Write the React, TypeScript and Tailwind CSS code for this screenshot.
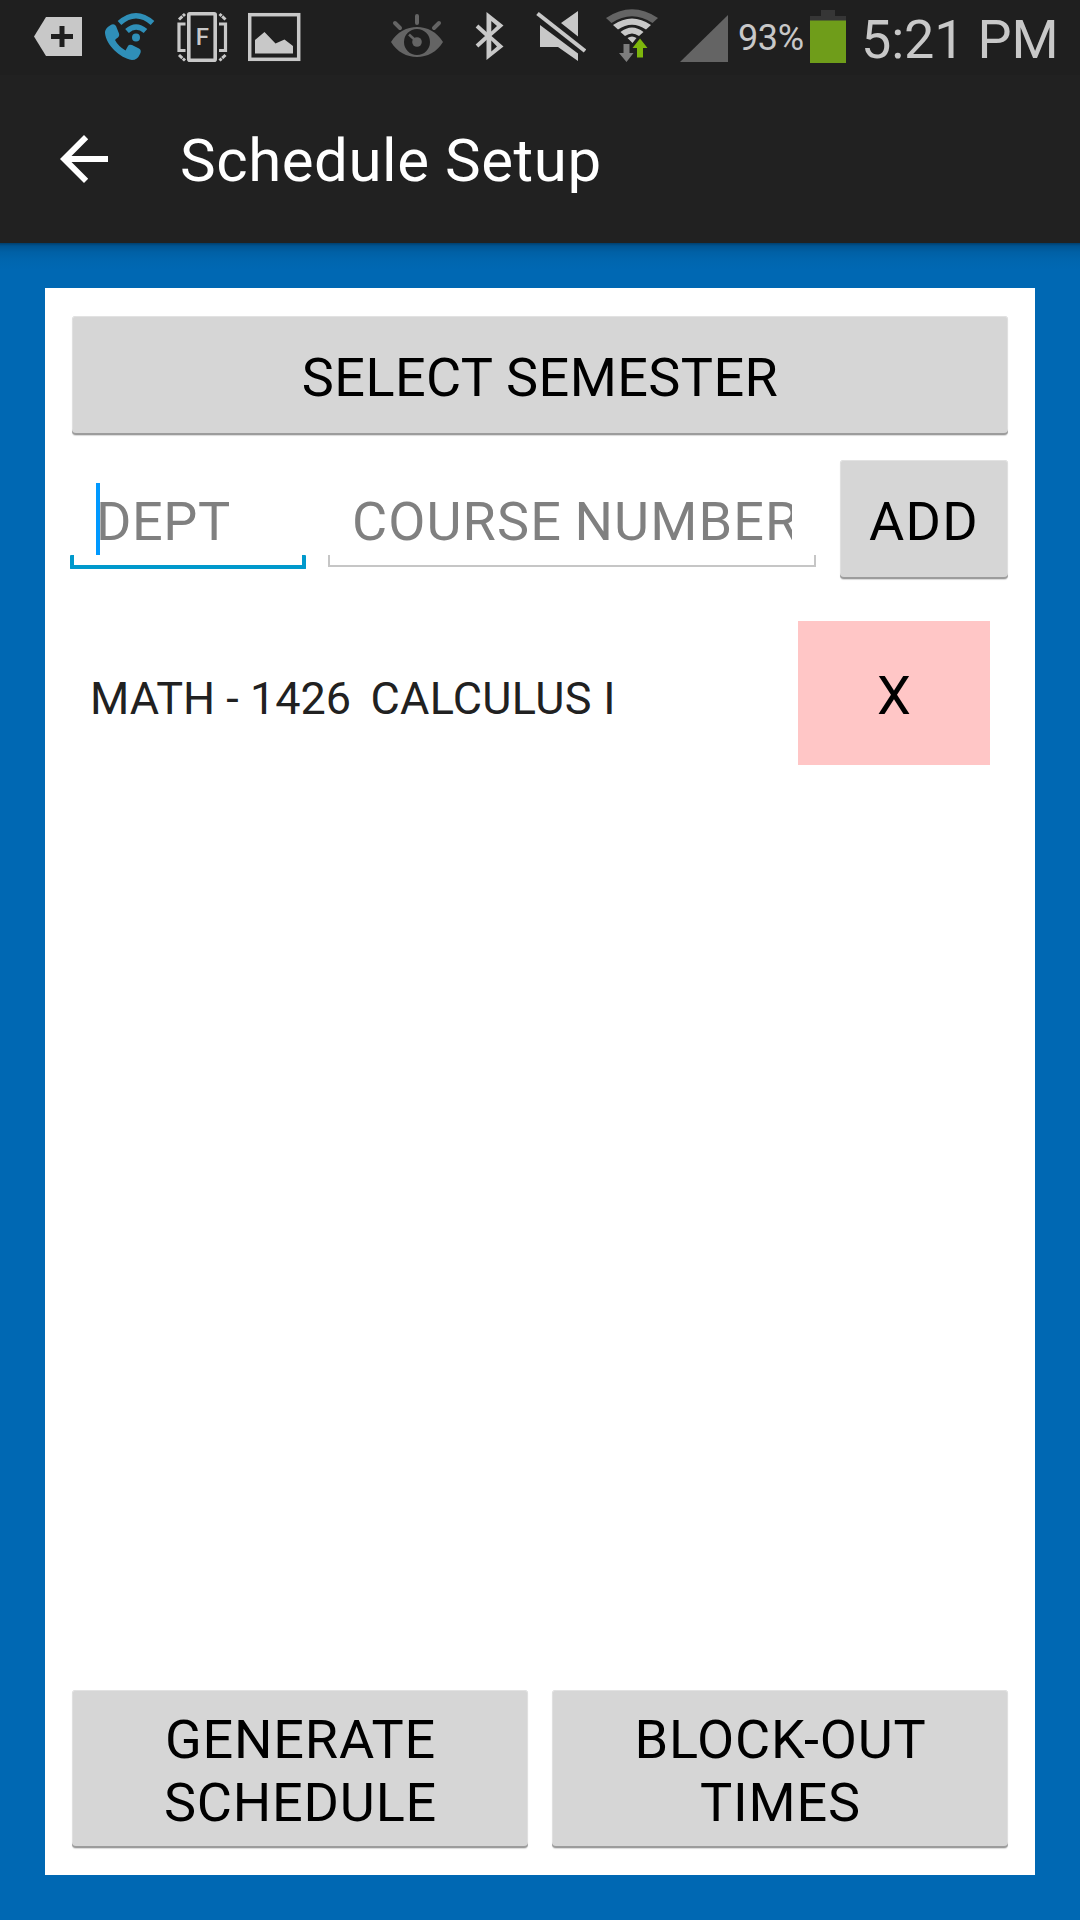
import type { ReactNode } from "react";

const raised =
  "bg-[#d6d6d6] rounded-[4px] text-black text-[54px] leading-[63px] text-center shadow-[inset_0_-2px_0_#9c9c9c,inset_0_1px_0_#e2e2e2,inset_1px_0_0_#e0e0e0,inset_-1px_0_0_#e0e0e0,0_1px_1px_rgba(0,0,0,0.15)]";

function Glyph({ x, w, className, children }: { x: number; w: number; className: string; children: ReactNode }) {
  return (
    <svg className={`shrink-0 ${className}`} width={w} height={75} viewBox={`${x} 0 ${w} 75`} fill="none">
      {children}
    </svg>
  );
}

function StatusBar() {
  return (
    <div className="flex h-[75px] w-full bg-[#1f1f1f] text-[#c8c8c8]">
      <Glyph x={34} w={48} className="ml-[34px]">
        <path d="M34 36.5 46 17H82V56H46Z" fill="#c8c8c8" />
        <path d="M51 36.5H73M62 26V47" stroke="#1f1f1f" strokeWidth="5" />
      </Glyph>
      <Glyph x={104} w={52} className="ml-[22px]">
        <path
          d="M110 25.5 Q114 23 116 26 L119 33.5 Q120 36.5 116.5 38.5 L115 40 Q118 46 125.500 50.500 L128 46 Q129 44 132 45 L139 48.500 Q142 50 140 54 Q137.500 60 132 60 C120 58 106 45 105 33 Q105 28 110 25.500Z"
          fill="#2f8fb8"
        />
        <path d="M119.500 23 Q136 8.500 152.500 23M127 31 Q136 23 145.500 31" stroke="#2f8fb8" strokeWidth="5.500" />
        <circle cx="136" cy="37.500" r="4" fill="#2f8fb8" />
      </Glyph>
      <Glyph x={176} w={52} className="ml-[20px]">
        <rect x="188.800" y="13.800" width="26.400" height="46.400" rx="1" stroke="#c8c8c8" strokeWidth="3.600" />
        <path d="M185.500 24H179V50.500H185.500M219 24H225.500V50.500H219" stroke="#c8c8c8" strokeWidth="3.200" />
        <path
          d="M179 19.500 L185 14M225.500 19.500 L219.500 14M179 55 L185 60.500M225.500 55 L219.500 60.500"
          stroke="#c8c8c8"
          strokeWidth="3"
          strokeDasharray="4.500 0.800"
        />
        <text x="202.300" y="44.500" textAnchor="middle" fontSize="24" fontWeight="500" fill="#c8c8c8" fontFamily="Roboto, sans-serif">
          F
        </text>
      </Glyph>
      <Glyph x={248} w={53} className="ml-[20px]">
        <rect x="249.700" y="14.700" width="49" height="44.600" stroke="#c8c8c8" strokeWidth="3.500" />
        <path d="M255 53.500V40L264.500 32L275.500 43.500L284.500 39.500L293 46V53.500Z" fill="#c8c8c8" />
      </Glyph>
      <Glyph x={390} w={54} className="ml-[89px]">
        <path
          fillRule="evenodd"
          d="M391 42 C403 22 431 22 443 42 C431 62 403 62 391 42ZM404 42 a13 13 0 1 0 26 0 a13 13 0 1 0 -26 0Z"
          fill="#646464"
        />
        <circle cx="417" cy="42" r="4.800" fill="#646464" />
        <path d="M409 34.500 L415 40" stroke="#646464" strokeWidth="2.500" />
        <path d="M417 16V23M395 23 L400 28M439 23 L434 28" stroke="#646464" strokeWidth="4" strokeLinecap="round" />
      </Glyph>
      <Glyph x={474} w={30} className="ml-[30px]">
        <path
          fillRule="evenodd"
          d="M486.500 12 L503.500 25.500 L491.500 36 L503.500 46.500 L486.500 60ZM491.300 21 V31.500 L497 26ZM491.300 40.500 V51.500 L497 46.500Z"
          fill="#c8c8c8"
        />
        <path d="M477 26 L488 36 L477 46" stroke="#c8c8c8" strokeWidth="4" />
      </Glyph>
      <Glyph x={535} w={51} className="ml-[31px]">
        <path d="M561 23 L578 11V36.500ZM540 25 L578 53.500V61L558 47H540Z" fill="#c8c8c8" />
        <path d="M537.500 13.500 L585 51" stroke="#c8c8c8" strokeWidth="4" />
      </Glyph>
      <Glyph x={606} w={53} className="ml-[20px]">
        <path d="M606 18 Q632 0.500 658 18 L652.500 23 Q632 9.500 611.500 23Z" fill="#646464" />
        <path
          d="M613 25 Q632 12 651 25 L646 29.500 Q632 20 618 29.500ZM620.500 32 Q632 23 643.500 32 L639 36 Q632 31 625 36ZM627.500 38 Q632 35 636.500 38 L632.500 43Z"
          fill="#c8c8c8"
        />
        <path d="M623.500 44H629.500V53H633.500L626.500 62L619 53H623.500Z" fill="#7d7d7d" />
        <path d="M637 57.500H643V48H647.500L640 38.500L632.500 48H637Z" fill="#7db60c" />
      </Glyph>
      <Glyph x={680} w={48} className="ml-[21px]">
        <path d="M680 62 L728 15V62Z" fill="#646464" />
      </Glyph>
      <span className="ml-[10px] w-[67px] whitespace-nowrap pt-[17px] text-[36px] leading-[42px] tracking-[-0.4px]">93%</span>
      <Glyph x={810} w={36} className="ml-[5px]">
        <path d="M821 10H835V16H846V21H810V16H821Z" fill="#363636" />
        <path d="M810 20.500H846V63H810Z" fill="#6f9d1a" />
      </Glyph>
      <span className="ml-[15px] whitespace-nowrap pt-[8px] text-[54px] leading-[63px] tracking-[-0.2px]">5:21 PM</span>
    </div>
  );
}

function CourseForm() {
  return (
    <div className="mt-[25px] flex h-[119px] w-full text-[54px] leading-[63px] text-[#808080]">
      <div className="-ml-[2px] flex w-[236px] flex-col">
        <div className="mt-[23px] flex h-[72px] pl-[26px]">
          <div className="w-[4px] shrink-0 bg-[#0099ff]" />
          <span className="-ml-[4px] pt-[7px] tracking-[0.6px]">DEPT</span>
        </div>
        <div className="h-[14px] rounded-[1px] border-4 border-t-0 border-[#0099cc]" />
      </div>
      <div className="ml-[22px] flex w-[488px] flex-col">
        <div className="mx-[24px] mt-[23px] h-[72px] overflow-hidden whitespace-nowrap pt-[7px] tracking-[1.1px] [word-spacing:-2px]">
          COURSE NUMBER
        </div>
        <div className="h-[12px] border-2 border-t-0 border-[#c6c6c6]" />
      </div>
      <button className={`ml-[24px] h-[119px] w-[168px] pt-[3px] tracking-[1.3px] ${raised}`}>ADD</button>
    </div>
  );
}

export default function App() {
  return (
    <div className="flex h-[1920px] w-[1080px] flex-col overflow-hidden bg-[#0068b3] font-['Roboto',sans-serif]">
      <StatusBar />
      <header className="flex h-[168px] w-full shrink-0 items-center bg-[#212121] text-white">
        <svg className="ml-[60px]" width="48" height="48" viewBox="0 0 48 48" fill="white">
          <path d="M48 21H11.500L28.200 4.200L24 0L0 24L24 48L28.200 43.800L11.500 27H48Z" />
        </svg>
        <h1 className="ml-[72px] pt-[4px] text-[60px] leading-[70px] tracking-[0.55px]">Schedule Setup</h1>
      </header>
      <div className="h-[45px] shrink-0 bg-[linear-gradient(to_bottom,#003f6d_0px,#005492_3px,#0060a5_9px,#0066af_18px,#0068b3_27px)]" />
      <main className="mx-[45px] flex h-[1587px] shrink-0 flex-col bg-white px-[27px] pt-[28px] pb-[27px]">
        <button className={`h-[119px] w-full shrink-0 pt-[3px] tracking-[0.4px] ${raised}`}>SELECT SEMESTER</button>
        <CourseForm />
        <div className="mt-[42px] flex h-[144px] items-center justify-between pr-[18px] pl-[18px]">
          <span className="whitespace-pre pt-[11px] text-[45px] leading-[53px] text-[#212121]">
            {"MATH - 1426  "}
            <span className="-ml-[3px] tracking-[0.3px]">CALCULUS I</span>
          </span>
          <button className="h-[144px] w-[192px] bg-[#ffc6c6] pt-[5px] text-[54px] leading-[63px] text-black">X</button>
        </div>
        <div className="mt-auto flex h-[158px] gap-[24px]">
          <button className={`h-full flex-1 pr-[60px] pl-[61px] pt-[3px] tracking-[0.8px] ${raised}`}>GENERATE SCHEDULE</button>
          <button className={`h-full flex-1 pr-[60px] pl-[61px] pt-[3px] tracking-[0.8px] ${raised}`}>BLOCK-OUT TIMES</button>
        </div>
      </main>
    </div>
  );
}
